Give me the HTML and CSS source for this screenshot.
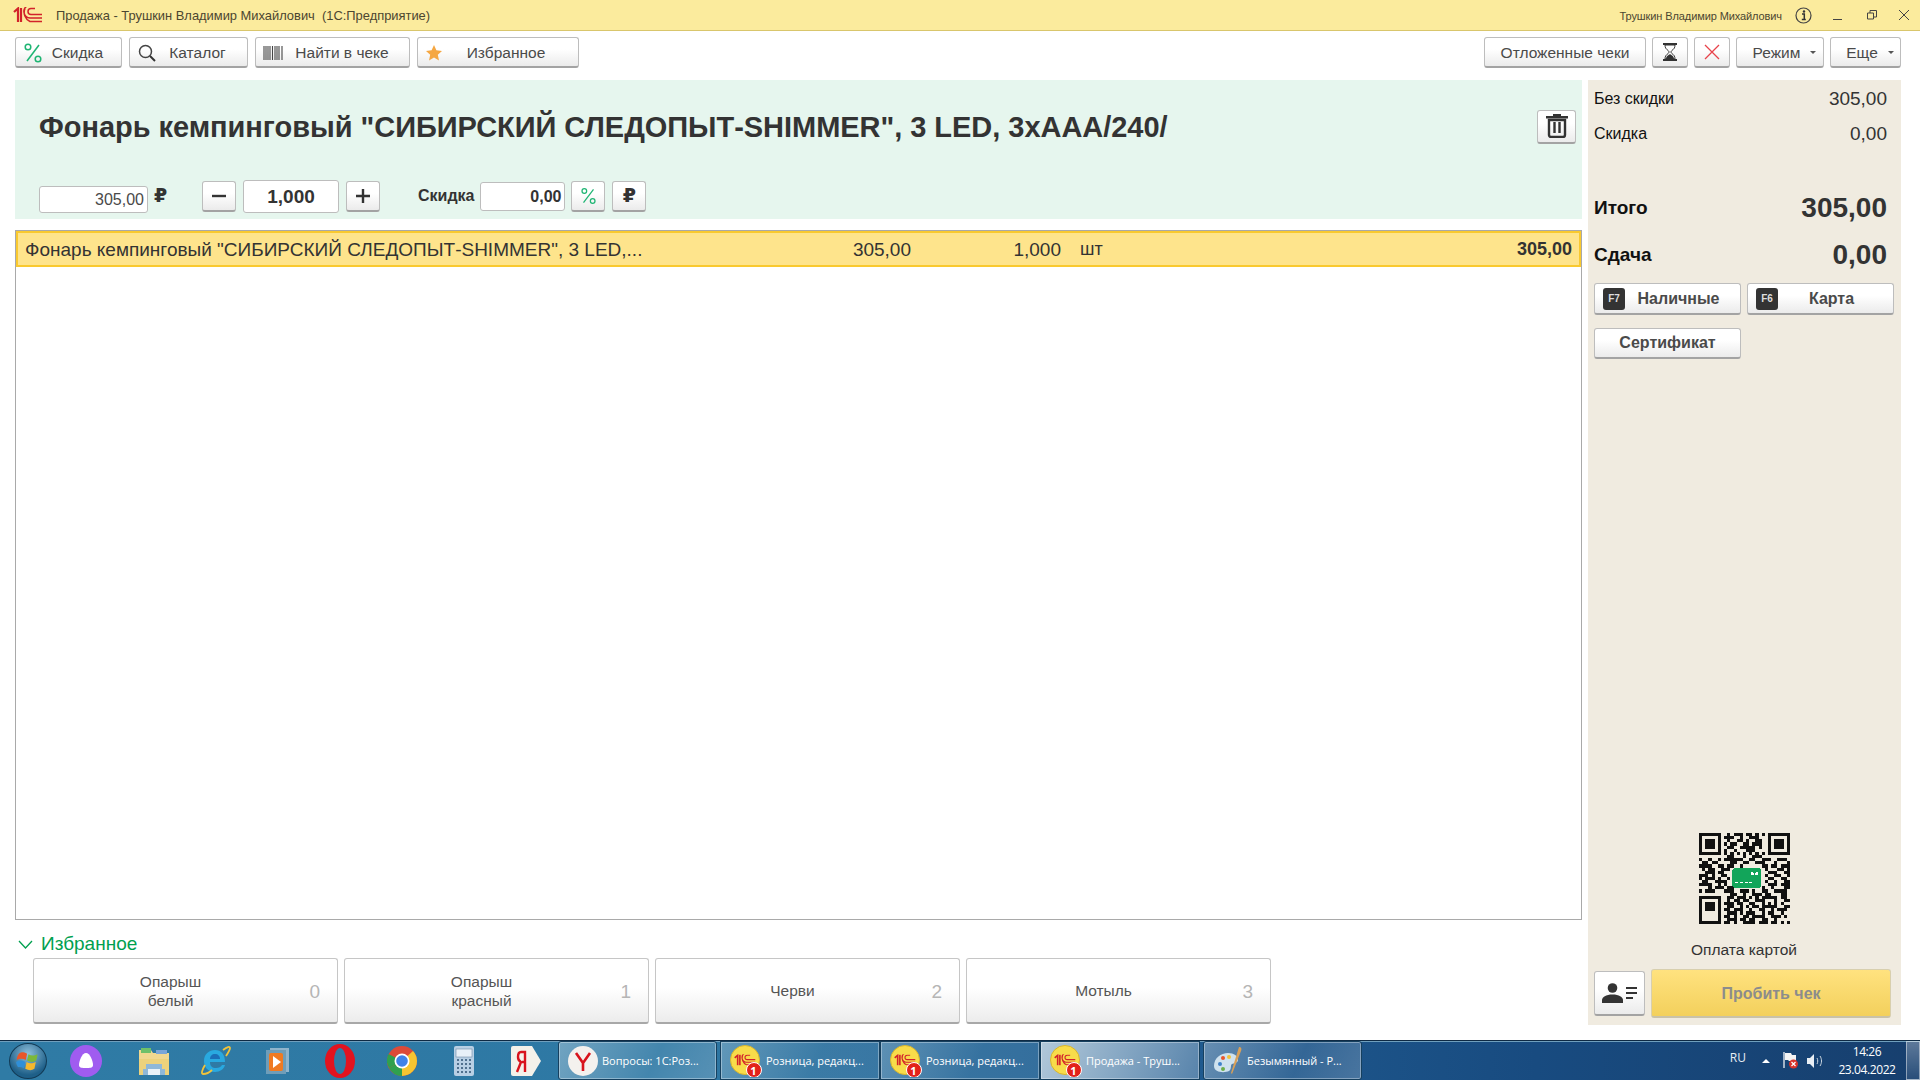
FILE: index.html
```html
<!DOCTYPE html>
<html lang="ru">
  <head>
    <meta charset="UTF-8" />
    <title>Продажа - Трушкин Владимир Михайлович (1С:Предприятие)</title>
    <link rel="stylesheet" href="styles.css">
  </head>
  <body>
    <svg class="defs" width="0" height="0">
      <symbol id="logo-1c" viewBox="0 0 30 16">
        <path d="M1 5l4-3.500v13.500M8 15V1" fill="none" stroke="#d2232a" stroke-width="2.200"/>
        <path d="M29 7.500H18a3 3 0 0 1 0-6h4M29 11H17a6.500 6.500 0 0 1-3-12M29 14.500H17a10 10 0 0 1-5-13" fill="none" stroke="#d2232a" stroke-width="1.500"/>
      </symbol>
      <symbol id="pct" viewBox="0 0 18 20">
        <path d="M15 2L3 18" stroke="#1fb573" stroke-width="1.500"/>
        <circle cx="4" cy="4" r="2.800" fill="none" stroke="#1fb573" stroke-width="1.500"/>
        <circle cx="14" cy="16" r="2.800" fill="none" stroke="#1fb573" stroke-width="1.500"/>
      </symbol>
      <symbol id="task-1c" viewBox="0 0 32 32">
        <circle cx="15" cy="15" r="14.500" fill="#f8dc4a" stroke="#d9b52c"/>
        <svg x="4" y="8" width="22" height="14" viewBox="0 0 30 16"><use href="#logo-1c"/></svg>
        <circle cx="24" cy="25" r="7.500" fill="#e2231a" stroke="#fff"/>
      </symbol>
    </svg>

    <header class="titlebar">
      <svg class="logo" width="30" height="16"><use href="#logo-1c"/></svg>
      <span class="title-text">Продажа - Трушкин Владимир Михайлович&nbsp; (1С:Предприятие)</span>
      <span class="user-name">Трушкин Владимир Михайлович</span>
      <svg class="info" width="17" height="17" viewBox="0 0 17 17">
        <circle cx="8.500" cy="8.500" r="7.500" fill="none" stroke="#444" stroke-width="1.200"/>
        <path d="M7 7h2.300v5M6.800 12.500h4" fill="none" stroke="#333" stroke-width="1.500"/>
        <circle cx="9" cy="4.500" r="1.200" fill="#333"/>
      </svg>
      <svg width="10" height="10" viewBox="0 0 10 10"><path d="M0 9.500h9" stroke="#444" stroke-width="1"/></svg>
      <svg class="win-restore" width="10" height="10" viewBox="0 0 10 10"><path d="M.5 3h6v6h-6zM3 3V.5h6.500V7H7" fill="none" stroke="#444"/></svg>
      <svg width="12" height="12" viewBox="0 0 12 12"><path d="M1 1l10 10M11 1L1 11" stroke="#444" stroke-width="1"/></svg>
    </header>

    <div class="toolbar">
      <button class="btn w-discount">
        <svg width="18" height="20"><use href="#pct"/></svg>
        <span class="btn-label">Скидка</span>
      </button>
      <button class="btn w-catalog">
        <svg width="18" height="18" viewBox="0 0 18 18">
          <circle cx="7.500" cy="7.500" r="6" fill="none" stroke="#444" stroke-width="1.500"/>
          <path d="M12 12l5 5" stroke="#333" stroke-width="2"/>
        </svg>
        <span class="btn-label">Каталог</span>
      </button>
      <button class="btn w-find">
        <svg width="20" height="14" viewBox="0 0 20 14">
          <path d="M1 0v14M3 0v14M5 0v14M7 0v14M9.500 0v14M12 0v14M14 0v14M16 0v14M19 0v14" stroke="#444" stroke-width="1.100"/>
        </svg>
        <span class="btn-label">Найти в чеке</span>
      </button>
      <button class="btn w-fav">
        <svg width="16" height="16" viewBox="0 0 16 16">
          <path d="M8 0l2.400 5.300 5.600.6-4.200 3.800 1.200 5.700L8 12.500 3 15.400l1.200-5.700L0 5.900l5.600-.6z" fill="#f5a742"/>
        </svg>
        <span class="btn-label">Избранное</span>
      </button>

      <div class="toolbar-right">
        <button class="btn w-held">Отложенные чеки</button>
        <button class="btn w-icon">
          <svg width="14" height="18" viewBox="0 0 14 18">
            <path d="M0 1h14M0 17h14" stroke="#333" stroke-width="2"/>
            <path d="M2 2c0 5 4 5 4 7s-4 2-4 7h10c0-5-4-5-4-7s4-2 4-7z" fill="none" stroke="#333"/>
            <path d="M3 16c0-3 3-4 4-5 1 1 4 2 4 5z" fill="#333"/>
          </svg>
        </button>
        <button class="btn w-icon">
          <svg width="16" height="16" viewBox="0 0 16 16"><path d="M1 1l14 14M15 1L1 15" stroke="#e8434b" stroke-width="1.300"/></svg>
        </button>
        <button class="btn w-mode">Режим<i class="caret"></i></button>
        <button class="btn w-more">Еще<i class="caret"></i></button>
      </div>
    </div>

    <main class="workspace">
      <section class="left-col">
        <div class="item-panel">
          <div class="item-title">
            <h1>Фонарь кемпинговый "СИБИРСКИЙ СЛЕДОПЫТ-SHIMMER", 3 LED, 3хААА/240/</h1>
            <button class="btn btn-trash">
              <svg width="22" height="24" viewBox="0 0 22 24">
                <path d="M7 2V0h8v2h7v2.500H0V2z" fill="#333"/>
                <path d="M3 6h16v15a2 2 0 0 1-2 2H5a2 2 0 0 1-2-2z" fill="none" stroke="#333" stroke-width="2.400"/>
                <path d="M8.500 8v11M13.500 8v11" stroke="#333" stroke-width="2.400"/>
              </svg>
            </button>
          </div>
          <div class="item-controls">
            <div class="field field-price">305,00</div>
            <span class="rub">₽</span>
            <button class="btn btn-sq btn-minus"><svg width="14" height="14" viewBox="0 0 14 14"><path d="M0 7h14" stroke="#333" stroke-width="2.400"/></svg></button>
            <div class="field field-qty">1,000</div>
            <button class="btn btn-sq"><svg width="14" height="14" viewBox="0 0 14 14"><path d="M0 7h14M7 0v14" stroke="#333" stroke-width="2.400"/></svg></button>
            <span class="discount-label">Скидка</span>
            <div class="field field-disc">0,00</div>
            <button class="btn btn-sq"><svg width="15" height="18"><use href="#pct"/></svg></button>
            <button class="btn btn-sq btn-rub">₽</button>
          </div>
        </div>

        <div class="table">
          <div class="row row-selected">
            <span>Фонарь кемпинговый "СИБИРСКИЙ СЛЕДОПЫТ-SHIMMER", 3 LED,...</span>
            <span class="num">305,00</span>
            <span class="num">1,000</span>
            <span class="unit">шт</span>
            <span class="num sum">305,00</span>
          </div>
        </div>

        <div class="favs">
          <div class="favs-head">
            <svg width="15" height="9" viewBox="0 0 15 9"><path d="M1 1l6.500 7L14 1" fill="none" stroke="#00a04f" stroke-width="1.300"/></svg>
            <span>Избранное</span>
          </div>
          <div class="favs-row">
            <button class="fav"><span class="fav-label">Опарыш<br>белый</span><span class="fav-num">0</span></button>
            <button class="fav"><span class="fav-label">Опарыш<br>красный</span><span class="fav-num">1</span></button>
            <button class="fav"><span class="fav-label">Черви</span><span class="fav-num">2</span></button>
            <button class="fav"><span class="fav-label">Мотыль</span><span class="fav-num">3</span></button>
          </div>
        </div>
      </section>

      <aside class="totals">
        <div class="line"><span>Без скидки</span><span class="val">305,00</span></div>
        <div class="line"><span>Скидка</span><span class="val">0,00</span></div>
        <div class="line-big line-total"><span>Итого</span><span class="val-big">305,00</span></div>
        <div class="line-big line-change"><span>Сдача</span><span class="val-big">0,00</span></div>

        <div class="pay-btns">
          <button class="btn btn-pay"><i class="fkey">F7</i><span class="pay-label">Наличные</span></button>
          <button class="btn btn-pay"><i class="fkey">F6</i><span class="pay-label">Карта</span></button>
          <button class="btn btn-pay btn-cert">Сертификат</button>
        </div>

        <div class="qr-block">
          <svg class="qr" width="91" height="91" viewBox="0 0 29 29">
            <path fill="none" stroke="#111" stroke-width="1" d="
              M0 .5h7M9 .5h1M11 .5h3M15 .5h2M18 .5h1M20 .5h1M22 .5h7
              M0 1.500h1M6 1.500h1M8 1.500h3M13 1.500h1M16 1.500h3M22 1.500h1M28 1.500h1
              M0 2.500h1M2 2.500h3M6 2.500h1M9 2.500h1M12 2.500h2M15 2.500h1M18 2.500h2M22 2.500h1M24 2.500h3M28 2.500h1
              M0 3.500h1M2 3.500h3M6 3.500h1M8 3.500h1M10 3.500h2M14 3.500h2M17 3.500h3M22 3.500h1M24 3.500h3M28 3.500h1
              M0 4.500h1M2 4.500h3M6 4.500h1M9 4.500h2M13 4.500h5M19 4.500h1M22 4.500h1M24 4.500h3M28 4.500h1
              M0 5.500h1M6 5.500h1M8 5.500h1M11 5.500h1M15 5.500h3M22 5.500h1M28 5.500h1
              M0 6.500h7M8 6.500h1M10 6.500h1M12 6.500h1M14 6.500h1M16 6.500h1M18 6.500h1M20 6.500h1M22 6.500h7
              M9 7.500h2M14 7.500h1M17 7.500h3
              M0 8.500h1M3 8.500h1M6 8.500h1M8 8.500h6M16 8.500h2M20 8.500h3M25 8.500h3
              M1 9.500h2M4 9.500h2M10 9.500h2M14 9.500h2M18 9.500h3M24 9.500h1M28 9.500h1
              M0 10.500h4M6 10.500h2M9 10.500h2M13 10.500h1M20 10.500h2M23 10.500h2M26 10.500h3
              M1 11.500h1M3 11.500h2M7 11.500h3M21 11.500h1M25 11.500h2M28 11.500h1
              M2 12.500h3M6 12.500h2M22 12.500h3M27 12.500h2
              M0 13.500h3M4 13.500h1M7 13.500h2M21 13.500h1M24 13.500h2M28 13.500h1
              M0 14.500h1M2 14.500h3M6 14.500h1M9 14.500h1M22 14.500h2M26 14.500h2
              M1 15.500h2M5 15.500h4M21 15.500h1M24 15.500h1M27 15.500h2
              M0 16.500h4M6 16.500h1M8 16.500h1M22 16.500h3M26 16.500h3
              M3 17.500h1M5 17.500h3M9 17.500h2M20 17.500h1M23 17.500h1M27 17.500h2
              M0 18.500h1M2 18.500h3M8 18.500h3M13 18.500h3M17 18.500h1M20 18.500h2M24 18.500h4
              M10 19.500h2M14 19.500h1M17 19.500h3M21 19.500h2M26 19.500h2
              M0 20.500h7M9 20.500h2M12 20.500h3M16 20.500h1M18 20.500h1M20 20.500h5M26 20.500h2
              M0 21.500h1M6 21.500h1M9 21.500h1M11 21.500h2M14 21.500h2M18 21.500h2M20 21.500h1M24 21.500h1M27 21.500h2
              M0 22.500h1M2 22.500h3M6 22.500h1M8 22.500h3M12 22.500h2M16 22.500h2M20 22.500h1M22 22.500h1M24 22.500h1M26 22.500h1
              M0 23.500h1M2 23.500h3M6 23.500h1M9 23.500h2M13 23.500h1M15 23.500h1M17 23.500h2M20 23.500h5M27 23.500h2
              M0 24.500h1M2 24.500h3M6 24.500h1M8 24.500h2M11 24.500h3M16 24.500h1M19 24.500h2M23 24.500h1M25 24.500h3
              M0 25.500h1M6 25.500h1M9 25.500h3M13 25.500h1M15 25.500h3M20 25.500h1M22 25.500h2M26 25.500h1
              M0 26.500h1M6 26.500h1M8 26.500h2M11 26.500h1M14 26.500h2M17 26.500h4M23 26.500h3M27 26.500h1
              M0 27.500h1M6 27.500h1M9 27.500h3M13 27.500h2M16 27.500h2M20 27.500h2M24 27.500h1
              M0 28.500h7M8 28.500h2M11 28.500h1M14 28.500h4M19 28.500h3M23 28.500h2M26 28.500h1M28 28.500h1"/>
            <rect x="10.600" y="11.300" width="9.300" height="6.100" rx=".6" fill="#12a55a"/>
            <path d="M11.500 15.800h1M13 15.800h1M14.500 15.800h1M16 15.800h1" stroke="#fff" stroke-width=".35"/>
            <circle cx="17" cy="13" r=".5" fill="#fff"/>
            <circle cx="18.400" cy="13" r=".5" fill="#fff"/>
          </svg>
          <div class="qr-caption">Оплата картой</div>
        </div>

        <div class="check-row">
          <button class="btn btn-person">
            <svg width="36" height="20" viewBox="0 0 36 20">
              <circle cx="10.500" cy="5" r="4.800" fill="#333"/>
              <path d="M0 20v-3c0-3 4-5.500 10.500-5.500S21 14 21 17v3z" fill="#333"/>
              <path d="M24 5h11M24 10h11M24 15h7" stroke="#333" stroke-width="2"/>
            </svg>
          </button>
          <button class="btn-check">Пробить чек</button>
        </div>
      </aside>
    </main>

    <footer class="taskbar">
      <div class="start-orb">
        <svg width="26" height="24" viewBox="0 0 26 24">
          <path d="M2 4c3-2 6-2 10 0l-1.500 7c-3-2-6-2-10 0z" fill="#e8562a"/>
          <path d="M13.500 4.500c3 2 6 2 10 0L22 11.500c-3 2-6 2-10 0z" fill="#7cb83a"/>
          <path d="M0 13c3-2 6-2 10 0L8.500 20c-3-2-6-2-10 0z" fill="#2f8fd8"/>
          <path d="M11.500 13c3 2 6 2 10 0L20 20.500c-3 2-6 2-10 0z" fill="#f5b82e"/>
        </svg>
      </div>

      <div class="pins">
        <span class="pin">
          <svg width="32" height="32" viewBox="0 0 32 32"><circle cx="16" cy="16" r="16" fill="#a05cf0"/><path d="M16 8c4 0 7 8 7 12 0 3-3 3-7 3s-7 0-7-3c0-4 3-12 7-12z" fill="#fff"/></svg>
        </span>
        <span class="pin pin-gap">
          <svg width="32" height="30" viewBox="0 0 32 30">
            <path d="M1 4h12l2 3h16v22H1z" fill="#f0d890"/>
            <path d="M3 2h10v5H3z" fill="#6ec06a"/><path d="M18 4h11v4H18z" fill="#7aa6d8"/>
            <path d="M1 13h30v16H1z" fill="#ecd27c"/>
            <path d="M8 18h16v5h3v6H5v-6h3z" fill="#8fb8d8"/>
            <path d="M10 23h12v6H10z" fill="#e9f2f8"/>
          </svg>
        </span>
        <span class="pin">
          <svg width="30" height="32" viewBox="0 0 30 32">
            <path d="M14 27C6 27 3 21 3 16 3 9 8 5 14 5s10 4 10 12H9c0 4 2 6 6 6 3 0 5-1 6-3h3c-1 4-5 7-10 7z" fill="#29a9e0"/>
            <path d="M9 14h10c0-3-2-5-5-5s-5 2-5 5z" fill="#1b6fb8"/>
            <path d="M22 5c4-3 7-4 7-2 0 2-2 5-4 8M4 20c-3 5-4 9-2 9 2 0 6-1 9-4" fill="none" stroke="#f1c33a" stroke-width="1.800"/>
          </svg>
        </span>
        <span class="pin">
          <svg width="26" height="30" viewBox="0 0 26 30">
            <path d="M5 2h19v24H5z" fill="#8fb4cc"/><path d="M1 4h20v24H1z" fill="#6f9db8"/>
            <rect x="4" y="7" width="14" height="18" rx="2" fill="#ef7a22"/>
            <path d="M8 10l8 6-8 6z" fill="#fff"/>
          </svg>
        </span>
        <span class="pin">
          <svg width="30" height="34" viewBox="0 0 30 34"><ellipse cx="15" cy="17" rx="15" ry="17" fill="#e2131f"/><ellipse cx="15" cy="17" rx="6" ry="13" fill="#2f7aa5"/></svg>
        </span>
        <span class="pin">
          <svg width="30" height="30" viewBox="0 0 30 30">
            <circle cx="15" cy="15" r="15" fill="#dd4a38"/>
            <path d="M15 15L2 22A15 15 0 0 0 15 30z" fill="#2fa04f"/>
            <path d="M15 15L2 22 A15 15 0 0 1 1.500 8z" fill="#2fa04f"/>
            <path d="M15 15V30A15 15 0 0 0 30 15 15 15 0 0 0 26 5z" fill="#f6c531"/>
            <circle cx="15" cy="15" r="7.500" fill="#fff"/>
            <circle cx="15" cy="15" r="5.800" fill="#3f82e8"/>
          </svg>
        </span>
        <span class="pin">
          <svg width="20" height="30" viewBox="0 0 20 30">
            <rect width="20" height="30" rx="2" fill="#b8cfe4"/>
            <rect x="2" y="3" width="16" height="8" fill="#e8f0f8" stroke="#6f8aa6" stroke-width=".6"/>
            <path d="M3 14h2M7 14h2M11 14h2M15 14h2M3 18h2M7 18h2M11 18h2M15 18h2M3 22h2M7 22h2M11 22h2M15 22h2M3 26h2M7 26h2M11 26h2M15 26h2" stroke="#50708e" stroke-width="2"/>
          </svg>
        </span>
        <span class="pin">
          <svg width="30" height="30" viewBox="0 0 30 30">
            <path d="M2 0h19l9 15-9 15H2a2 2 0 0 1-2-2V2a2 2 0 0 1 2-2z" fill="#f4f1ea"/>
            <path d="M14 26V6h-4c-2 0-3 2-3 5s1 4 3 5l-4 10M14 16h-3" fill="none" stroke="#d8131d" stroke-width="2.400"/>
          </svg>
        </span>
      </div>

      <div class="tasks">
        <div class="task">
          <svg width="30" height="30" viewBox="0 0 30 30"><circle cx="15" cy="15" r="15" fill="#f4f1ee"/><path d="M8 7l7 10v8M22 7l-7 10" fill="none" stroke="#d8131d" stroke-width="2.600"/></svg>
          <span>Вопросы: 1С:Роз...</span>
        </div>
        <div class="task-group">
          <div class="task task-joined">
            <svg width="32" height="32"><use href="#task-1c"/></svg><b class="task-badge">1</b>
            <span>Розница, редакц...</span>
          </div>
          <div class="task task-joined">
            <svg width="32" height="32"><use href="#task-1c"/></svg><b class="task-badge">1</b>
            <span>Розница, редакц...</span>
          </div>
          <div class="task task-joined task-active">
            <svg width="32" height="32"><use href="#task-1c"/></svg><b class="task-badge">1</b>
            <span>Продажа - Труш...</span>
          </div>
        </div>
        <div class="task">
          <svg width="30" height="30" viewBox="0 0 30 30">
            <path d="M1 20c0-8 7-13 14-13 6 0 10 3 10 7 0 3-4 3-6 4-2 1 0 5-3 7-4 2-15 2-15-5z" fill="#cfe2ee"/>
            <circle cx="7" cy="18" r="2" fill="#3f82c8"/><circle cx="10" cy="12" r="2" fill="#e8562a"/><circle cx="16" cy="11" r="2" fill="#f1c33a"/><circle cx="10" cy="23" r="2" fill="#6cae4a"/>
            <path d="M26 1c2 0 3 1 2 4l-9 23-1-1z" fill="#d8a058"/>
          </svg>
          <span>Безымянный - Р...</span>
        </div>
      </div>

      <div class="tray">
        <span class="lang">RU</span>
        <i class="tray-arrow"></i>
        <svg width="15" height="17" viewBox="0 0 15 17">
          <path d="M1 0v16" stroke="#fff" stroke-width="1.200"/>
          <path d="M2 1h6l1 2h4v6H6L5 8H2z" fill="#f4f4f4"/>
          <circle cx="10.500" cy="12" r="4.500" fill="#d8322a"/>
          <path d="M8.500 10l4 4M12.500 10l-4 4" stroke="#fff" stroke-width="1.200"/>
        </svg>
        <svg width="16" height="14" viewBox="0 0 16 14">
          <path d="M0 4h3l4-4v14l-4-4H0z" fill="#e8eef4"/>
          <path d="M10 4c1 2 1 4 0 6M13 2c2 3 2 7 0 10" fill="none" stroke="#cdd8e2" stroke-width="1"/>
        </svg>
        <div class="clock"><div>14:26</div><div>23.04.2022</div></div>
        <div class="show-desktop"></div>
      </div>
    </footer>
  </body>
</html>
```

FILE: styles.css
```css
:root {
  --text: #4a4a4a;
  --dark: #333333;
  --green: #00a04f;
  --btn-border: #bdbdbd;
  --btn-bottom: #a3a3a3;
}

* {
  margin: 0;
  padding: 0;
  box-sizing: border-box;
}

html,
body {
  height: 100%;
  overflow: hidden;
}

body {
  display: flex;
  flex-direction: column;
  background: #ffffff;
  color: var(--dark);
  font-family: "Liberation Sans", Arial, sans-serif;
  font-size: 16px;
}

.defs {
  position: absolute;
}

button {
  font-family: inherit;
  cursor: default;
}

/* Title bar */
.titlebar {
  height: 31px;
  flex: none;
  display: flex;
  align-items: center;
  padding: 0 10px 0 13px;
  background: #fbeb9d;
  border-bottom: 1px solid #d9c66c;
  font-size: 12.900px;
  color: #4b4630;
}

.title-text {
  margin-left: 13px;
  padding-top: 1px;
}

.user-name {
  margin-left: auto;
  padding-top: 1px;
  font-size: 11px;
  letter-spacing: -0.1px;
}

.info {
  margin: 0 21px 0 13px;
}

.win-restore {
  margin: 0 21px 0 24px;
}

/* Buttons */
.btn {
  display: flex;
  align-items: center;
  justify-content: center;
  height: 31px;
  padding: 1px 8px 0;
  background: linear-gradient(#ffffff 40%, #ebebeb);
  border: 1px solid var(--btn-border);
  border-bottom: 2px solid var(--btn-bottom);
  border-radius: 3px;
  color: var(--text);
  font-size: 16px;
}

.btn-label {
  flex: 1;
  text-align: center;
}

.toolbar {
  height: 49px;
  flex: none;
  display: flex;
  gap: 7px;
  padding: 6px 19px 0 15px;
  font-size: 15.500px;
}

.toolbar .btn {
  font-size: 15.500px;
}

.toolbar-right {
  margin-left: auto;
  display: flex;
  gap: 6px;
}

.w-discount { width: 107px; }
.w-catalog { width: 119px; }
.w-find { width: 155px; padding-left: 7px; }
.w-fav { width: 162px; }
.w-held { width: 162px; }
.w-icon { width: 36px; padding: 0; }
.w-mode { width: 88px; padding-left: 17px; }
.w-more { width: 71px; padding-left: 17px; }

.caret {
  margin-left: 10px;
  border-left: 3px solid transparent;
  border-right: 3px solid transparent;
  border-top: 3px solid #555;
}

/* Main area */
.workspace {
  flex: 1;
  min-height: 0;
  display: flex;
  padding: 0 19px 0 15px;
  gap: 6px;
}

.left-col {
  flex: 1;
  min-width: 0;
  display: flex;
  flex-direction: column;
}

.item-panel {
  height: 139px;
  flex: none;
  padding: 0 6px 0 24px;
  background: #e6f6ee;
}

.item-title {
  height: 93px;
  display: flex;
  align-items: center;
  justify-content: space-between;
}

.item-title h1 {
  padding-top: 1px;
  font-size: 29px;
  letter-spacing: -0.035px;
  line-height: 1;
  font-weight: bold;
  color: var(--dark);
}

.btn-trash {
  width: 39px;
  height: 34px;
  padding: 0;
}

.item-controls {
  height: 46px;
  display: flex;
  align-items: center;
}

.field {
  background: #ffffff;
  border: 1px solid #bdbdbd;
  border-radius: 3px;
  text-align: right;
}

.field-price {
  width: 109px;
  height: 27px;
  margin-top: 6px;
  padding-right: 3px;
  line-height: 26px;
  color: var(--text);
}

.rub {
  width: 54px;
  padding-left: 6px;
  margin-top: -2px;
  font-family: "Liberation Sans", "DejaVu Sans", sans-serif;
  font-size: 19px;
  font-weight: bold;
  color: var(--dark);
}

.btn-sq {
  width: 34px;
  padding: 0;
}

.btn-minus {
  margin-right: 7px;
}

.field-qty {
  width: 96px;
  height: 33px;
  margin-right: 7px;
  font-size: 19px;
  font-weight: bold;
  line-height: 32px;
  text-align: center;
}

.discount-label {
  margin: 0 6px 0 38px;
  font-weight: bold;
}

.field-disc {
  width: 85px;
  height: 29px;
  margin-right: 6px;
  padding-right: 3px;
  font-weight: bold;
  line-height: 28px;
}

.btn-sq + .btn-sq {
  margin-left: 7px;
}

.btn-rub {
  font-family: "Liberation Sans", "DejaVu Sans", sans-serif;
  font-size: 19px;
  font-weight: bold;
  color: var(--dark);
}

/* Table */
.table {
  flex: 1;
  min-height: 0;
  margin-top: 11px;
  border: 1px solid #a9a9a9;
}

.row {
  display: grid;
  grid-template-columns: 815px 71px 150px 79px 1fr;
  align-items: center;
  height: 36px;
  padding: 1px 7px 0;
  font-size: 19px;
  color: var(--dark);
}

.row-selected {
  background: #fee48c;
  border: 2px solid #f9c92f;
}

.num {
  text-align: right;
  font-size: 19px;
}

.unit {
  padding-left: 19px;
  font-size: 18px;
}

.sum {
  font-size: 18px;
  font-weight: bold;
}

/* Favourites */
.favs {
  flex: none;
  height: 120px;
}

.favs-head {
  height: 38px;
  display: flex;
  align-items: center;
  gap: 8px;
  padding: 10px 0 0 3px;
  color: var(--green);
  font-size: 19px;
}

.favs-row {
  display: flex;
  gap: 6px;
  padding-left: 18px;
}

.fav {
  width: 305px;
  height: 66px;
  display: flex;
  align-items: center;
  padding-top: 2px;
  background: linear-gradient(#ffffff 45%, #ececec);
  border: 1px solid #c6c6c6;
  border-bottom: 2px solid #a8a8a8;
  border-radius: 3px;
  color: #555555;
}

.fav-label {
  flex: 1;
  font-size: 15.500px;
  line-height: 18.500px;
}

.fav-num {
  width: 30px;
  padding-right: 17px;
  text-align: right;
  font-size: 19px;
  color: #b5b5b5;
}

/* Totals */
.totals {
  width: 313px;
  flex: none;
  height: 945px;
  display: flex;
  flex-direction: column;
  padding: 1px 7px 0 6px;
  background: #f0ebe0;
  color: #111111;
}

.line {
  height: 35px;
  display: flex;
  align-items: center;
  justify-content: space-between;
  padding-right: 7px;
}

.val {
  font-size: 19px;
  color: var(--dark);
}

.line-big {
  height: 48px;
  display: flex;
  align-items: center;
  justify-content: space-between;
  padding-right: 7px;
  font-size: 19px;
  font-weight: bold;
}

.line-total {
  margin-top: 33px;
}

.line-change {
  margin-top: -1px;
}

.val-big {
  font-size: 28px;
  color: var(--dark);
}

.pay-btns {
  display: grid;
  grid-template-columns: 147px 147px;
  gap: 13px 6px;
  margin-top: 4px;
}

.btn-pay {
  height: 32px;
  padding: 0 8px;
  font-weight: bold;
}

.pay-label {
  flex: 1;
  text-align: center;
}

.btn-cert {
  height: 31px;
}

.fkey {
  width: 22px;
  height: 22px;
  display: block;
  background: #333333;
  border-radius: 3px;
  color: #dddddd;
  font-size: 10px;
  font-style: normal;
  font-weight: bold;
  line-height: 22px;
  text-align: center;
}

.qr-block {
  margin-top: auto;
  text-align: center;
}

.qr {
  display: block;
  margin: 0 auto;
  shape-rendering: crispEdges;
}

.qr-caption {
  margin-top: 17px;
  font-size: 15.500px;
  color: var(--dark);
}

.check-row {
  display: flex;
  align-items: flex-end;
  gap: 6px;
  margin: 10px 0 7px;
}

.btn-person {
  width: 51px;
  height: 45px;
  padding: 0;
  margin-bottom: 2px;
}

.btn-check {
  width: 240px;
  height: 49px;
  padding-top: 2px;
  background: linear-gradient(#ffe27f, #f3d05c);
  border: 1px solid #d8cfae;
  border-bottom: 2px solid #c9c2a8;
  border-radius: 3px;
  color: #8c8c8c;
  font-size: 16px;
  font-weight: bold;
}

/* Windows taskbar */
.taskbar {
  height: 40px;
  flex: none;
  display: flex;
  align-items: stretch;
  background: linear-gradient(90deg, #2f7ba5 0%, #2e78a4 35%, #1f5a8f 62%, #184b80 80%, #173f6e 100%);
  border-top: 1px solid #0e2a44;
  box-shadow: inset 0 1px 0 #6f9fbd;
  color: #ffffff;
  font-family: "Open Sans", sans-serif;
  font-size: 11px;
}

.start-orb {
  width: 55px;
  flex: none;
  display: flex;
  align-items: center;
  justify-content: center;
}

.start-orb svg {
  width: 38px;
  height: 36px;
  padding: 6px;
  background: radial-gradient(circle at 50% 30%, #8fc0dc, #1e5f88 70%);
  border-radius: 50%;
  border: 1px solid #123a55;
}

.pins {
  display: flex;
  align-items: center;
  width: 503px;
  flex: none;
}

.pin {
  width: 62px;
  flex: none;
  display: flex;
  justify-content: center;
}

.pin-gap {
  margin-left: 6px;
}

.tasks {
  display: flex;
  gap: 3px;
  flex: none;
}

.task-group {
  display: flex;
}

.task {
  position: relative;
  width: 159px;
  display: flex;
  align-items: center;
  gap: 4px;
  padding-left: 9px;
  background: linear-gradient(115deg, rgba(255, 255, 255, 0.32), rgba(255, 255, 255, 0.1) 60%, rgba(255, 255, 255, 0.2));
  border: 1px solid #16405f;
  border-radius: 3px;
  box-shadow: inset 0 0 0 1px rgba(255, 255, 255, 0.35);
  white-space: nowrap;
}

.task-joined {
  width: 160px;
  border-radius: 0;
  background: linear-gradient(115deg, rgba(255, 255, 255, 0.25), rgba(255, 255, 255, 0.08) 60%);
}

.task-active {
  background: linear-gradient(115deg, rgba(255, 255, 255, 0.65), rgba(255, 255, 255, 0.25));
}

.task-badge {
  position: absolute;
  left: 25px;
  top: 21px;
  width: 15px;
  color: #ffffff;
  font-size: 11px;
  line-height: 15px;
  text-align: center;
}

.tray {
  flex: 1;
  display: flex;
  align-items: center;
  justify-content: flex-end;
  font-size: 12px;
}

.lang {
  margin: -6px 16px 0 0;
  color: #e8eef4;
}

.tray-arrow {
  margin-right: 13px;
  border-left: 4px solid transparent;
  border-right: 4px solid transparent;
  border-bottom: 4px solid #ffffff;
}

.tray svg {
  margin-right: 9px;
}

.tray svg:last-of-type {
  margin-right: 8px;
}

.clock {
  width: 72px;
  text-align: center;
  line-height: 18px;
  letter-spacing: -0.4px;
}

.show-desktop {
  width: 14px;
  margin-left: 3px;
  align-self: stretch;
  background: linear-gradient(rgba(255, 255, 255, 0.3), rgba(255, 255, 255, 0.08));
  border: 1px solid rgba(255, 255, 255, 0.45);
}
```
